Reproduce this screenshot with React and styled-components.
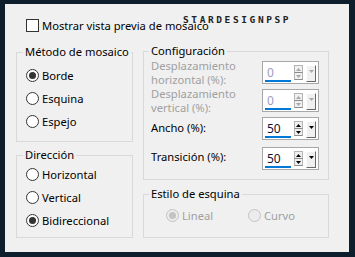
import React from "react";
import styled, { createGlobalStyle } from "styled-components";

const GlobalStyle = createGlobalStyle`
  html, body {
    margin: 0;
    padding: 0;
    background: #0e1e2c;
  }
  body {
    font-family: "Noto Sans", "Open Sans", sans-serif;
    font-size: 11.2px;
    color: #000;
  }
`;

const Frame = styled.div`
  width: 355px;
  height: 257px;
  box-sizing: border-box;
  padding: 4px 6px 5px 5px;
  background: #0e1e2c;
`;

const Panel = styled.div`
  position: relative;
  height: 100%;
  box-sizing: border-box;
  background: #f0f0f0;
  padding: 15px 0 0 11px;
`;

const Watermark = styled.div`
  position: absolute;
  top: 10px;
  left: 178px;
  font-family: "DejaVu Sans Mono", monospace;
  font-size: 9.5px;
  font-weight: bold;
  letter-spacing: 2.6px;
  white-space: nowrap;
  color: #222;
`;

const Header = styled.label`
  display: flex;
  align-items: center;
  gap: 3px;
  height: 13px;
  margin-left: 10px;
  line-height: 13px;
  white-space: nowrap;
`;

const CheckBox = styled.span`
  width: 13px;
  height: 13px;
  box-sizing: border-box;
  border: 1px solid #333;
  background: #fff;
`;

const Columns = styled.div`
  display: flex;
  align-items: flex-start;
  gap: 10px;
  margin-top: 11px;
`;

const Column = styled.div`
  display: flex;
  flex-direction: column;
  margin-top: ${(p) => p.$mt || 0}px;
`;

const Group = styled.fieldset`
  margin: ${(p) => p.$mt || 0}px 0 0 0;
  padding: 0;
  width: ${(p) => p.$w}px;
  box-sizing: border-box;
  border: 1px solid #d9d9d9;
  min-inline-size: 0;
`;

const Legend = styled.legend`
  margin-left: ${(p) => p.$ml ?? 6}px;
  padding: 0 2px;
  line-height: 16px;
  white-space: nowrap;
`;

const GroupBody = styled.div`
  display: flex;
  flex-direction: ${(p) => (p.$row ? "row" : "column")};
  padding: ${(p) => p.$pad};
`;

const RadioRow = styled.label`
  display: flex;
  align-items: center;
  gap: 3px;
  height: 23px;
  width: ${(p) => (p.$w ? `${p.$w}px` : "auto")};
  white-space: nowrap;
  color: ${(p) => (p.$disabled ? "#a0a0a0" : "#000")};
`;

const RadioCircle = styled.span`
  display: flex;
  align-items: center;
  justify-content: center;
  width: 13px;
  height: 13px;
  box-sizing: border-box;
  border-radius: 50%;
  border: 1px solid ${(p) => (p.$disabled ? "#c4c4c4" : "#333")};
  background: ${(p) => (p.$disabled ? "#ececec" : "#fff")};
  &::after {
    content: "";
    display: ${(p) => (p.$checked ? "block" : "none")};
    width: 7px;
    height: 7px;
    border-radius: 50%;
    background: ${(p) => (p.$disabled ? "#c4c4c4" : "#333")};
  }
`;

const ConfigRow = styled.div`
  display: flex;
  align-items: center;
  height: 23px;
  margin-top: ${(p) => p.$mt || 0}px;
`;

const ConfigLabel = styled.div`
  width: 111px;
  line-height: 13.5px;
  white-space: nowrap;
  color: ${(p) => (p.$disabled ? "#a0a0a0" : "#000")};
  margin-bottom: ${(p) => (p.$lift ? p.$lift : 0)}px;
`;

const Spin = styled.div`
  display: flex;
  width: 57px;
  height: 23px;
  box-sizing: border-box;
  border: 1px solid #a8a8a8;
  background: #fff;
  padding: 3px 2px 1px 1px;
`;

const Field = styled.div`
  display: flex;
  flex-direction: column;
  justify-content: space-between;
  width: 29px;
`;

const Value = styled.span`
  padding-left: 3px;
  line-height: 15px;
  font-size: 12px;
  color: ${(p) => (p.$disabled ? "#9c9cc0" : "#101030")};
`;

const Bar = styled.span`
  display: block;
  margin-left: 1px;
  width: 26px;
  height: 3px;
  background: #0078d7;
`;

const UpDown = styled.div`
  display: flex;
  flex-direction: column;
  width: 9px;
  height: 15px;
  margin-left: 1px;
`;

const ArrowBtn = styled.span`
  flex: 1;
  display: flex;
  align-items: center;
  justify-content: center;
  box-sizing: border-box;
  border: 1px solid #b4b4b4;
  border-bottom-color: #8c8c8c;
  background: #f0f0f0;
  & + & {
    border-top: none;
  }
`;

const DropBtn = styled.span`
  display: flex;
  justify-content: center;
  width: 10px;
  height: 17px;
  margin-left: 3px;
  box-sizing: border-box;
  padding-top: 4px;
  background: #f0f0f0;
  border-top: 1px solid #fff;
  border-left: 1px solid #fff;
  border-right: 1px solid #696969;
  border-bottom: 1px solid #696969;
`;

const Tri = ({ up, color }) => (
  <svg width="5" height="3" viewBox="0 0 5 3">
    <polygon points={up ? "0,3 5,3 2.5,0" : "0,0 5,0 2.5,3"} fill={color} />
  </svg>
);

function SpinBox({ value, disabled }) {
  const c = disabled ? "#a8a8a8" : "#000";
  return (
    <Spin>
      <Field>
        <Value $disabled={disabled}>{value}</Value>
        <Bar />
      </Field>
      <UpDown>
        <ArrowBtn>
          <Tri up color={c} />
        </ArrowBtn>
        <ArrowBtn>
          <Tri color={c} />
        </ArrowBtn>
      </UpDown>
      <DropBtn>
        <Tri color={c} />
      </DropBtn>
    </Spin>
  );
}

function Radio({ label, checked, disabled, w }) {
  return (
    <RadioRow $disabled={disabled} $w={w}>
      <RadioCircle $checked={checked} $disabled={disabled} />
      {label}
    </RadioRow>
  );
}

export default function App() {
  return (
    <Frame>
      <GlobalStyle />
      <Panel>
        <Watermark>STARDESIGNPSP</Watermark>
        <Header>
          <CheckBox />
          Mostrar vista previa de mosaico
        </Header>
        <Columns>
          <Column $mt={1}>
            <Group $w={117}>
              <Legend>Método de mosaico</Legend>
              <GroupBody $pad="4px 0 8px 9px">
                <Radio label="Borde" checked />
                <Radio label="Esquina" />
                <Radio label="Espejo" />
              </GroupBody>
            </Group>
            <Group $w={117} $mt={5}>
              <Legend>Dirección</Legend>
              <GroupBody $pad="0 0 5px 9px">
                <Radio label="Horizontal" />
                <Radio label="Vertical" />
                <Radio label="Bidireccional" checked />
              </GroupBody>
            </Group>
          </Column>
          <Column>
            <Group $w={186}>
              <Legend $ml={5}>Configuración</Legend>
              <GroupBody $pad="2px 0 9px 7px">
                <ConfigRow>
                  <ConfigLabel $disabled>
                    Desplazamiento
                    <br />
                    horizontal (%):
                  </ConfigLabel>
                  <SpinBox value="0" disabled />
                </ConfigRow>
                <ConfigRow $mt={5}>
                  <ConfigLabel $disabled>
                    Desplazamiento
                    <br />
                    vertical (%):
                  </ConfigLabel>
                  <SpinBox value="0" disabled />
                </ConfigRow>
                <ConfigRow $mt={5}>
                  <ConfigLabel $lift={2}>Ancho (%):</ConfigLabel>
                  <SpinBox value="50" />
                </ConfigRow>
                <ConfigRow $mt={7}>
                  <ConfigLabel $lift={4}>Transición (%):</ConfigLabel>
                  <SpinBox value="50" />
                </ConfigRow>
              </GroupBody>
            </Group>
            <Group $w={186} $mt={6}>
              <Legend $ml={5}>Estilo de esquina</Legend>
              <GroupBody $row $pad="2px 0 10px 22px">
                <Radio label="Lineal" checked disabled w={82} />
                <Radio label="Curvo" disabled />
              </GroupBody>
            </Group>
          </Column>
        </Columns>
      </Panel>
    </Frame>
  );
}
